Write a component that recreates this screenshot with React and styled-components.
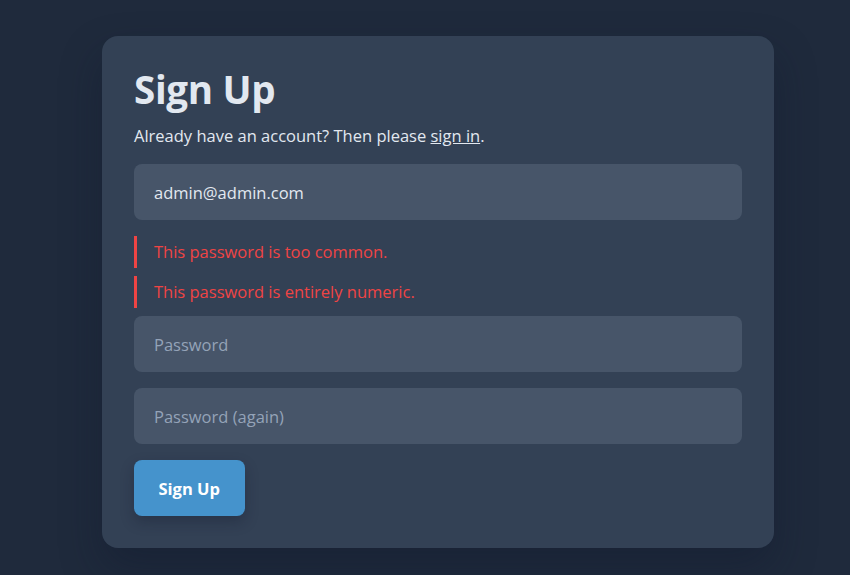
import styled, { createGlobalStyle } from "styled-components";

const GlobalStyle = createGlobalStyle`
    html, body {
        margin: 0;
        padding: 0;
        background: #1f2a3c;
        font-family: "Open Sans", "Noto Sans", sans-serif;
    }
`;

const Page = styled.div`
    min-height: 575px;
    padding: 36px 0 0 26px;
    box-sizing: border-box;
    display: flex;
    justify-content: center;
    align-items: flex-start;
    background: #1f2a3c;
`;

const Card = styled.form`
    width: 672px;
    box-sizing: border-box;
    padding: 32px;
    background: #334155;
    border-radius: 16px;
    box-shadow: 0 20px 40px rgba(15, 23, 42, 0.35);
    display: flex;
    flex-direction: column;
`;

const Title = styled.h1`
    margin: 0 0 12px;
    font-size: 38.5px;
    line-height: 42px;
    font-weight: 700;
    color: #e2e8f0;
    letter-spacing: -0.3px;
    padding-bottom: 2px;
`;

const Lead = styled.p`
    margin: 0 0 16px;
    font-size: 16.5px;
    line-height: 24px;
    color: #e2e8f0;

    a {
        color: #e2e8f0;
        text-decoration: underline;
    }
`;

const Input = styled.input`
    height: 56px;
    box-sizing: border-box;
    padding: 0 20px;
    border: none;
    border-radius: 8px;
    background: #475569;
    color: #e2e8f0;
    font-family: inherit;
    font-size: 16.5px;
    outline: none;
    margin-bottom: 16px;

    &::placeholder {
        color: #94a3b8;
    }
`;

const Errors = styled.ul`
    list-style: none;
    margin: 0 0 8px;
    padding: 0;
    display: flex;
    flex-direction: column;
    gap: 8px;
`;

const ErrorItem = styled.li`
    border-left: 3px solid #ef4444;
    padding: 4px 0 4px 17px;
    font-size: 16.5px;
    line-height: 24px;
    color: #ef4444;
`;

const Button = styled.button`
    align-self: flex-start;
    height: 56px;
    padding: 0 24.5px;
    border: none;
    border-radius: 8px;
    background: #4593cc;
    color: #ffffff;
    font-family: inherit;
    font-size: 16.5px;
    font-weight: 700;
    box-shadow: 0 6px 14px rgba(15, 23, 42, 0.3);
    cursor: pointer;
`;

const App = () => {
    return (
        <>
            <GlobalStyle />
            <Page>
                <Card onSubmit={(e) => e.preventDefault()}>
                    <Title>Sign Up</Title>
                    <Lead>
                        Already have an account? Then please <a href="#">sign in</a>.
                    </Lead>
                    <Input type="email" defaultValue="admin@admin.com" />
                    <Errors>
                        <ErrorItem>This password is too common.</ErrorItem>
                        <ErrorItem>This password is entirely numeric.</ErrorItem>
                    </Errors>
                    <Input type="password" placeholder="Password" />
                    <Input type="password" placeholder="Password (again)" />
                    <Button type="submit">Sign Up</Button>
                </Card>
            </Page>
        </>
    );
};

export default App;
